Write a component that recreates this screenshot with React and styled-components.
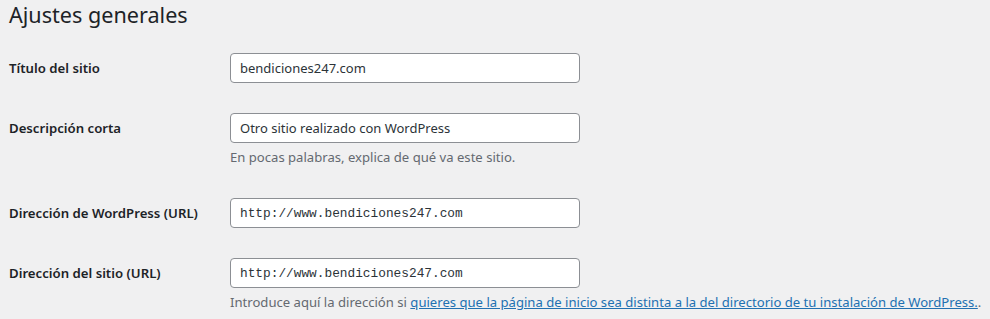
import React from "react";
import styled, { createGlobalStyle } from "styled-components";

const Global = createGlobalStyle`
  html, body { margin: 0; padding: 0; background: #f0f0f1; }
  body { font-family: "Noto Sans", "Open Sans", sans-serif; color: #3c434a; font-size: 13px; }
`;

const Wrap = styled.div`
  padding: 0 10px 0 9px;
`;

const Title = styled.h1`
  margin: 0;
  padding: 0;
  font-size: 21.6px;
  font-weight: 400;
  line-height: 29px;
  color: #1d2327;
  height: 38px;
`;

const Table = styled.div`
  display: flex;
  flex-direction: column;
`;

const Row = styled.div`
  display: grid;
  grid-template-columns: 221px 1fr;
  padding: 15px 0;
`;

const Label = styled.label`
  font-weight: 600;
  font-size: 13.2px;
  color: #1d2327;
  line-height: 30px;
`;

const Field = styled.div`
  display: flex;
  flex-direction: column;
`;

const Input = styled.input`
  box-sizing: border-box;
  width: 350px;
  height: 30px;
  margin: 0;
  padding: 0 9px;
  border: 1px solid #8c8f94;
  border-radius: 4px;
  background: #fff;
  color: #2c3338;
  font-family: ${(p) => (p.$mono ? '"Liberation Mono", monospace' : '"Noto Sans", sans-serif')};
  font-size: ${(p) => (p.$mono ? "12.8px" : "13px")};
  outline: none;
`;

const Desc = styled.p`
  margin: 4px 0 0;
  font-size: 13.1px;
  line-height: 21px;
  color: #646970;
  white-space: nowrap;
`;

const Link = styled.a`
  color: #2271b1;
  text-decoration: underline;
`;

export default function App() {
  return (
    <Wrap>
      <Global />
      <Title>Ajustes generales</Title>
      <Table>
        <Row>
          <Label>Título del sitio</Label>
          <Field>
            <Input defaultValue="bendiciones247.com" />
          </Field>
        </Row>
        <Row>
          <Label>Descripción corta</Label>
          <Field>
            <Input defaultValue="Otro sitio realizado con WordPress" />
            <Desc>En pocas palabras, explica de qué va este sitio.</Desc>
          </Field>
        </Row>
        <Row>
          <Label>Dirección de WordPress (URL)</Label>
          <Field>
            <Input $mono defaultValue="http://www.bendiciones247.com" />
          </Field>
        </Row>
        <Row>
          <Label>Dirección del sitio (URL)</Label>
          <Field>
            <Input $mono defaultValue="http://www.bendiciones247.com" />
            <Desc>
              Introduce aquí la dirección si{" "}
              <Link href="#">quieres que la página de inicio sea distinta a la del directorio de tu instalación de WordPress.</Link>.
            </Desc>
          </Field>
        </Row>
      </Table>
    </Wrap>
  );
}
